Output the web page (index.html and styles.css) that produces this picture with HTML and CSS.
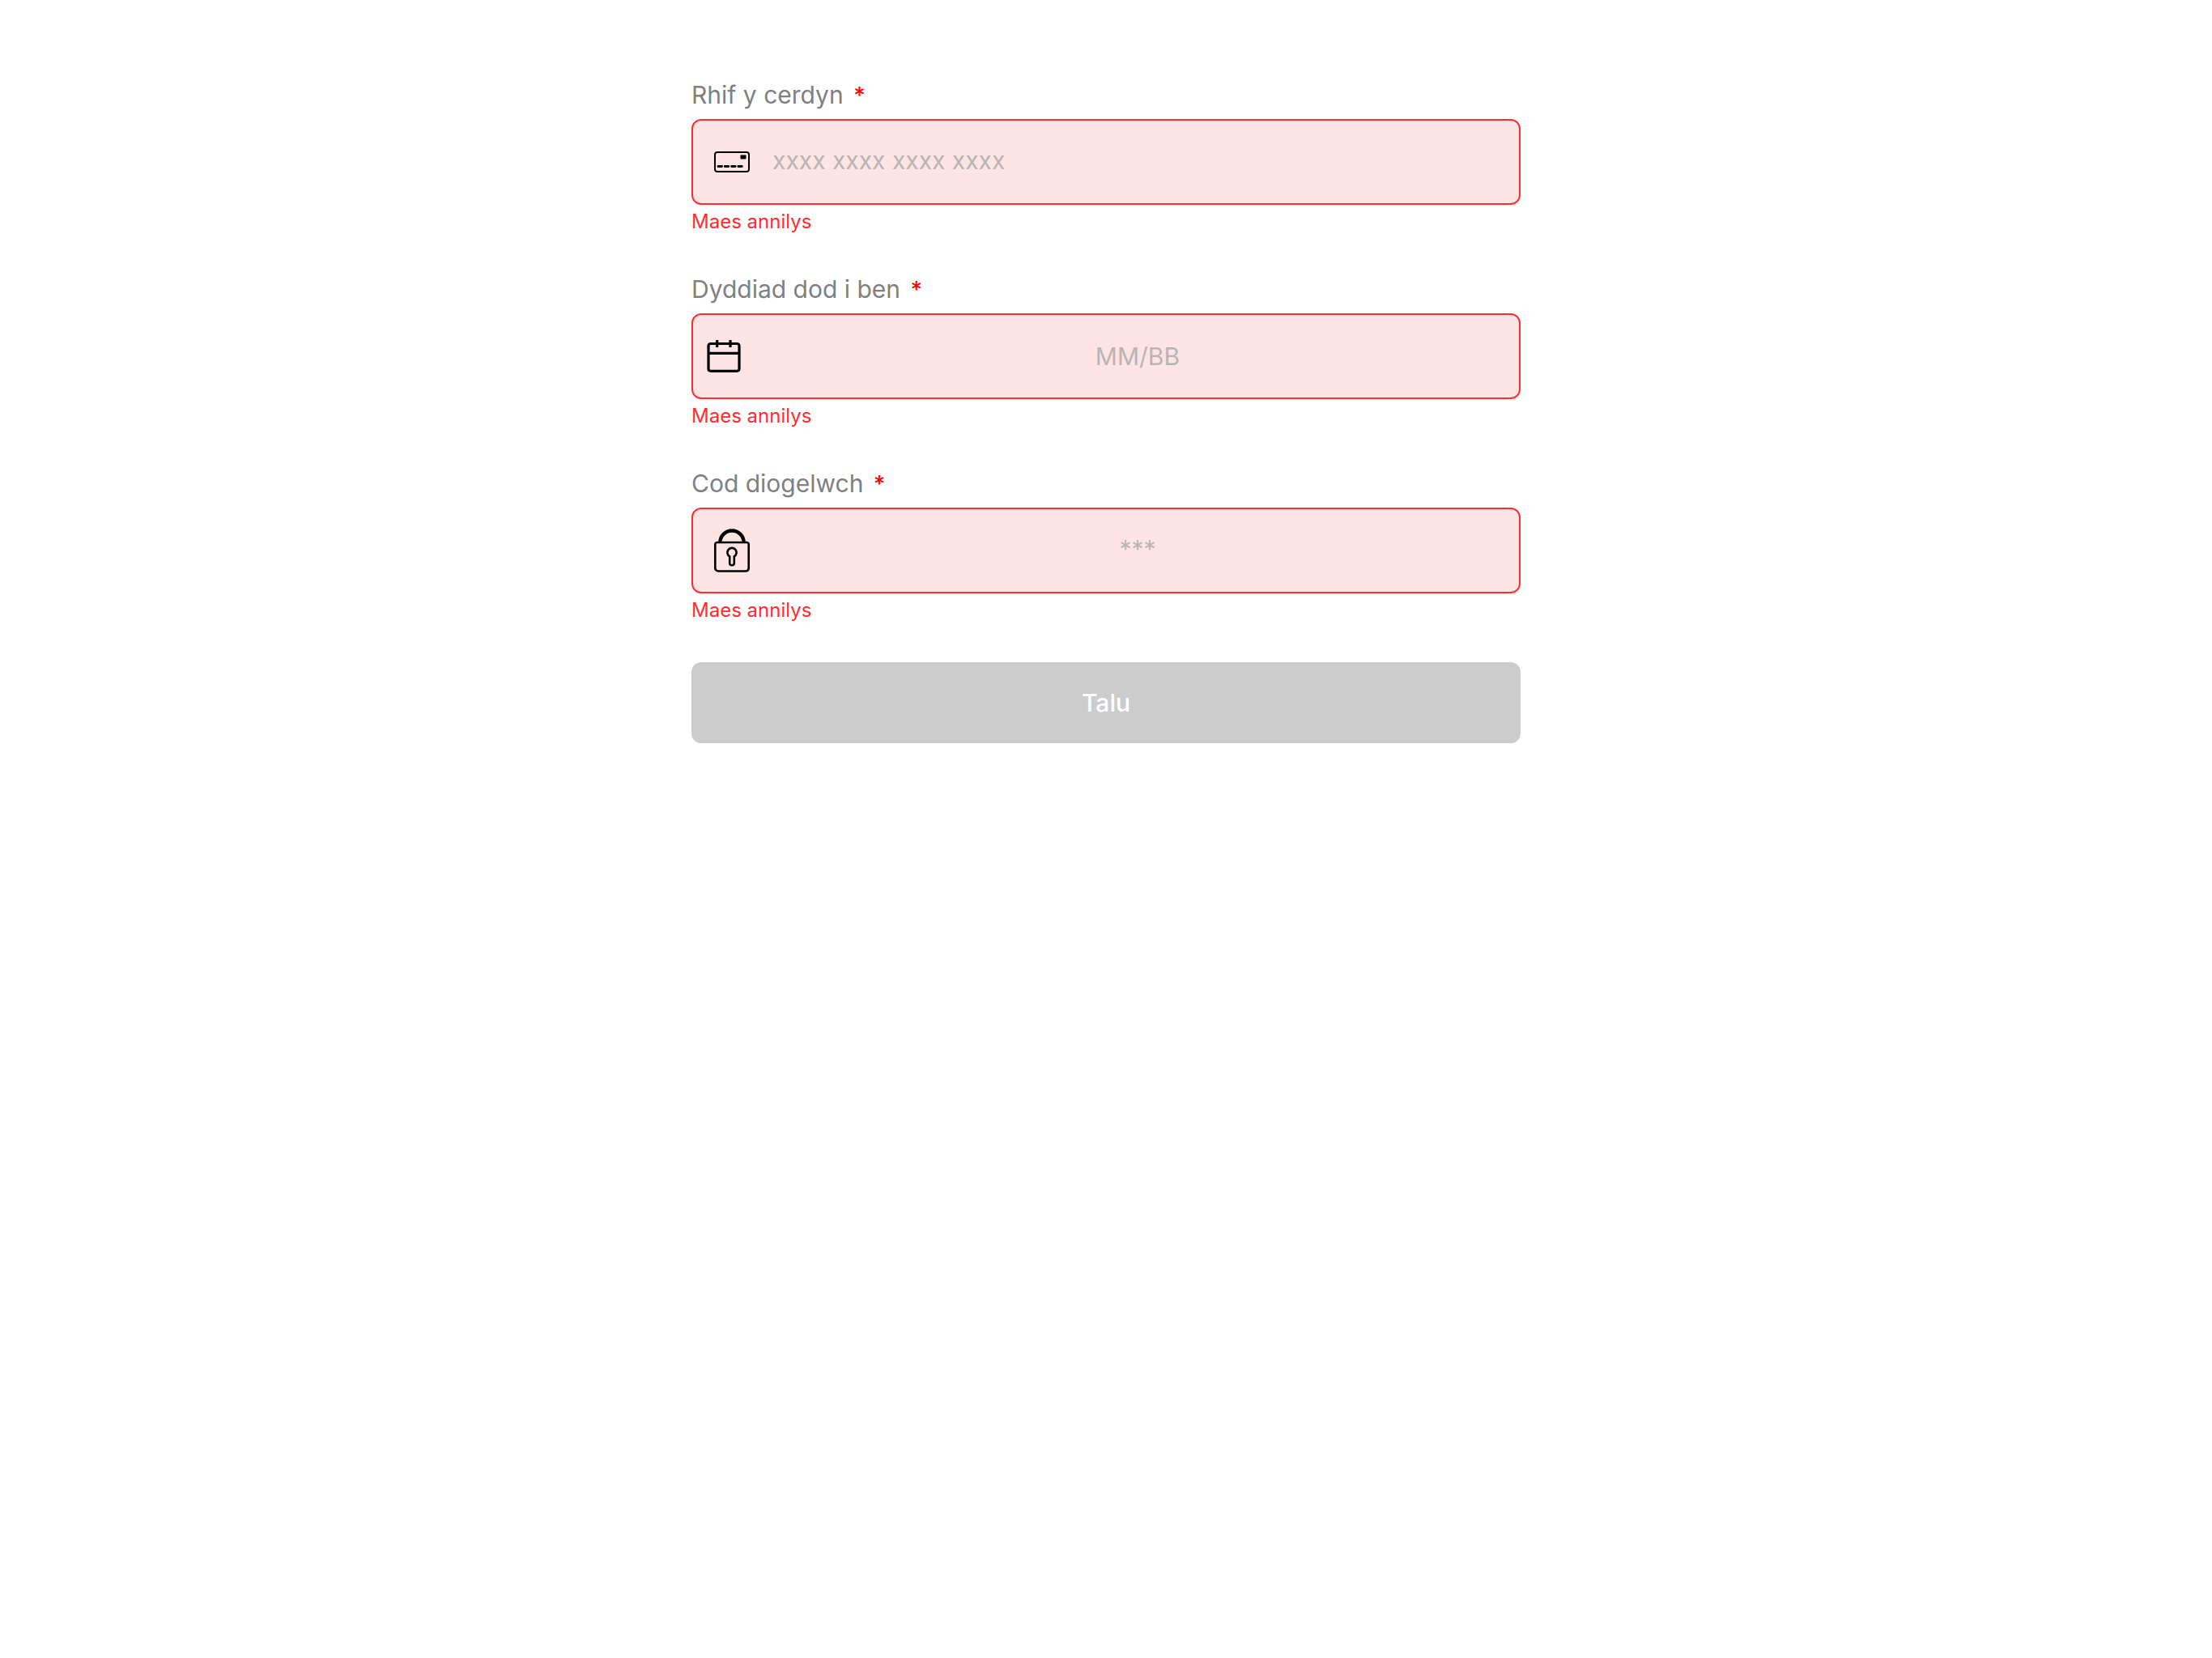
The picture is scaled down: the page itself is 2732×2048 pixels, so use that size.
FILE: index.html
```html
<!DOCTYPE html>
<html lang="cy">
<head>
<meta charset="utf-8">
<meta name="viewport" content="width=device-width, initial-scale=1">
<title>Talu</title>
<link rel="stylesheet" href="styles.css">
</head>
<body>
<form class="payment">
  <div class="field">
    <label class="field-label" for="card-number">Rhif y cerdyn <span class="required">*</span></label>
    <div class="field-box">
      <span class="field-icon">
        <svg width="44" height="26" viewBox="0 0 44 26" aria-hidden="true">
          <rect x="1" y="1" width="42" height="24" rx="3" fill="none" stroke="#000" stroke-width="2"/>
          <rect x="32.5" y="4.5" width="7" height="5" rx=".8"/>
          <path d="M5 18.500h4.500M13.300 18.500h4.500M21.600 18.500h4.500M29.800 18.500h4.500" stroke="#000" stroke-width="2.800" stroke-linecap="round"/>
        </svg>
      </span>
      <input class="field-input field-input-raised" id="card-number" type="text" inputmode="numeric" placeholder="xxxx xxxx xxxx xxxx" aria-invalid="true" aria-describedby="card-number-error">
    </div>
    <p class="field-error" id="card-number-error">Maes annilys</p>
  </div>
  <div class="field">
    <label class="field-label" for="expiry">Dyddiad dod i ben <span class="required">*</span></label>
    <div class="field-box">
      <span class="field-icon field-icon-date">
        <svg width="42" height="40" viewBox="0 0 42 40" aria-hidden="true">
          <path d="M5 4.500h32q3 0 3 3v28q0 2.800-3 2.800H5q-3 0-3-2.800V7.500q0-3 3-3zM2 16.300h38M12.700 0v9M29 0v9" fill="none" stroke="#000" stroke-width="3.200"/>
        </svg>
      </span>
      <input class="field-input field-input-centered" id="expiry" type="text" inputmode="numeric" placeholder="MM/BB" aria-invalid="true" aria-describedby="expiry-error">
    </div>
    <p class="field-error" id="expiry-error">Maes annilys</p>
  </div>
  <div class="field">
    <label class="field-label" for="security-code">Cod diogelwch <span class="required">*</span></label>
    <div class="field-box">
      <span class="field-icon">
        <svg width="44" height="54" viewBox="0 0 44 54" fill="none" stroke="#000" aria-hidden="true">
          <path d="M7.200 17C7.700 8.500 14 2.500 22 2.500S36.300 8.500 36.800 17" stroke-width="4.400"/>
          <path d="M4 17h36q2.700 0 2.700 2.700v28.500q0 4.300-4.300 4.300H5.600q-4.300 0-4.300-4.300V19.700Q1.300 17 4 17z" stroke-width="2.600"/>
          <path d="M19.200 34.300a5.600 5.600 0 1 1 5.600 0V42.500a2.800 2.800 0 0 1-5.600 0z" stroke-width="2.600"/>
        </svg>
      </span>
      <input class="field-input field-input-centered field-input-raised" id="security-code" type="text" inputmode="numeric" placeholder="***" aria-invalid="true" aria-describedby="security-code-error">
    </div>
    <p class="field-error" id="security-code-error">Maes annilys</p>
  </div>
  <button class="pay-button" type="submit" disabled>Talu</button>
</form>
</body>
</html>
```
FILE: styles.css
```css
*, *::before, *::after {
  box-sizing: border-box;
}

body {
  margin: 0;
  padding: 98px 32px;
  background: #fff;
  font-family: Inter, "Liberation Sans", sans-serif;
  font-size: 30px;
}

.payment {
  display: flex;
  flex-direction: column;
  gap: 47px;
  max-width: 1024px;
  margin: 0 auto;
}

.field {
  display: flex;
  flex-direction: column;
}

.field-label {
  margin-bottom: 11px;
  line-height: 38px;
  color: #808080;
}

.required {
  margin-left: 4px;
  font-size: 28px;
  line-height: 1;
  font-weight: 500;
  color: #f00;
}

.field-box {
  display: flex;
  align-items: stretch;
  min-height: 106px;
  border: 2px solid #ff2d2d;
  border-radius: 12px;
  background: #ffe4e5;
  overflow: hidden;
}

.field-icon {
  display: flex;
  align-items: center;
  flex: 0 0 78px;
  padding-left: 26px;
}

.field-icon-date {
  padding-left: 17px;
}

.field-input {
  flex: 1;
  min-width: 0;
  padding: 0 20px;
  border: 0;
  outline: 0;
  background: transparent;
  color: #000;
  font: inherit;
}

.field-input::placeholder {
  color: #b8b5b5;
  opacity: 1;
}

.field-input-centered {
  text-align: center;
}

.field-input-raised {
  padding-bottom: 4px;
}

.field-error {
  margin: 4px 0 0;
  font-size: 24px;
  line-height: 34px;
  color: #ff2d2d;
}

.pay-button {
  min-height: 100px;
  border: 0;
  border-radius: 12px;
  background: #ccc;
  color: #fff;
  font: inherit;
  font-weight: 500;
}
```
